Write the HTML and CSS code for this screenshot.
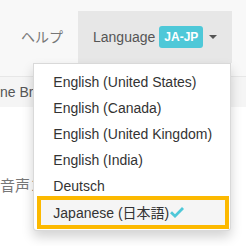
FILE: index.html
```html
<!DOCTYPE html>
<html lang="ja">
<head>
<meta charset="UTF-8">
<meta name="viewport" content="width=device-width, initial-scale=1">
<title>Language</title>
<link rel="stylesheet" href="styles.css">
</head>
<body>
<header class="navbar">
  <ul class="nav">
    <li class="nav-item"><a href="#">ヘルプ</a></li>
    <li class="nav-item open">
      <a href="#" class="dropdown-toggle">Language <span class="badge">JA-JP</span><span class="caret"></span></a>
      <ul class="dropdown-menu">
        <li><a href="#">English (United States)</a></li>
        <li><a href="#">English (Canada)</a></li>
        <li><a href="#">English (United Kingdom)</a></li>
        <li><a href="#">English (India)</a></li>
        <li><a href="#">Deutsch</a></li>
        <li class="selected"><a href="#">Japanese (日本語)<svg class="check" width="14" height="11" viewBox="0 0 14 11"><path d="M0 6.3 L2 4.3 L5 7.2 L12 0 L14 2 L5 11 Z" fill="#4ec8d8"/></svg></a></li>
      </ul>
    </li>
  </ul>
</header>

<div class="crumbs">ne Browser</div>

<main class="content">
  <p class="section-title">音声コンテンツ</p>
</main>
</body>
</html>
```

FILE: styles.css
```css
* { box-sizing: border-box; }
html, body { min-height: 246px; }
body { margin: 0; font-family: "Liberation Sans", "Noto Sans CJK JP", sans-serif; font-size: 14px; color: #333; background: #fff; }
a { text-decoration: none; color: inherit; }
ul { list-style: none; margin: 0; padding: 0; }

.navbar { background: #f8f8f8; border-bottom: 1px solid #e7e7e7; padding: 11px 0 13px 6px; }
.nav { display: flex; }
.nav-item { position: relative; }
.nav-item > a { display: flex; align-items: center; height: 52px; padding: 0 15px; line-height: 20px; color: #777; }
.nav-item.open > a { background: #e7e7e7; color: #555; }

.badge { display: inline-block; margin-left: 4px; padding: 4px 5px; background: #4ec8d8; color: #fff; font-size: 12px; font-weight: bold; line-height: 14px; border-radius: 3px; }
.caret { display: inline-block; width: 0; height: 0; margin-left: 6px; border-top: 4px solid #555; border-left: 4px solid transparent; border-right: 4px solid transparent; }

.dropdown-menu { position: absolute; top: 100%; right: 1px; width: 198px; padding: 5px 0 1px; background: #fff; border: 1px solid rgba(0,0,0,0.15); border-radius: 0 0 4px 4px; box-shadow: 0 6px 12px rgba(0,0,0,0.175); z-index: 10; }
.dropdown-menu a { display: flex; align-items: center; height: 26px; padding: 0 19px; line-height: 20px; color: #333; white-space: nowrap; }
.dropdown-menu .selected a { height: 33px; margin: -3px 1px 0 3px; padding: 0 12px; border: 4px solid #fcb900; background: #f5f5f5; }
.check { margin-left: 1px; }

.crumbs { background: #f5f5f5; padding: 5px 0; line-height: 20px; color: #555; white-space: nowrap; overflow: hidden; }

.content { padding-top: 68px; }
.section-title { margin: 0; font-size: 15px; line-height: 22px; color: #777; white-space: nowrap; overflow: hidden; }
```
